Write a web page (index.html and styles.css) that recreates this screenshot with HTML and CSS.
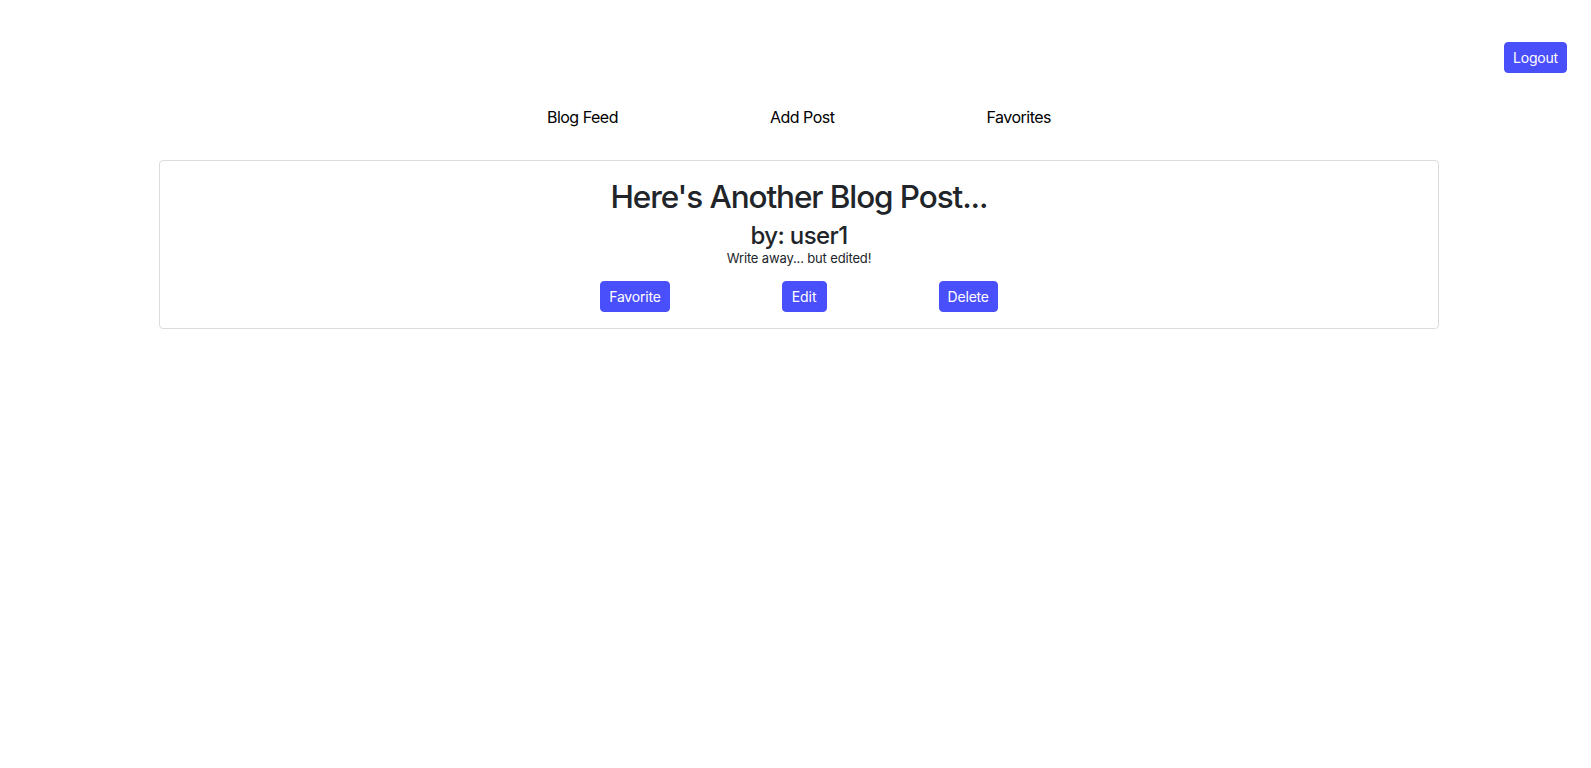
FILE: index.html
```html
<!DOCTYPE html>
<html lang="en">
<head>
<meta charset="utf-8">
<title>Blog</title>
<link rel="stylesheet" href="styles.css">
</head>
<body>
<header class="topbar">
  <button class="btn">Logout</button>
</header>
<main class="page">
  <nav class="nav">
    <a class="nav-link" href="#">Blog Feed</a>
    <a class="nav-link" href="#">Add Post</a>
    <a class="nav-link" href="#">Favorites</a>
  </nav>
  <section class="card">
    <h2 class="post-title">Here's Another Blog Post...</h2>
    <h4 class="post-author">by: user1</h4>
    <p class="post-body">Write away... but edited!</p>
    <div class="actions">
      <button class="btn">Favorite</button>
      <button class="btn btn-edit">Edit</button>
      <button class="btn">Delete</button>
    </div>
  </section>
</main>
</body>
</html>
```
FILE: styles.css
```css
* { box-sizing: border-box; }
body {
  margin: 0;
  font-family: Inter, "Noto Sans", "Liberation Sans", sans-serif;
  color: #212529;
  background: #fff;
}
.topbar {
  display: flex;
  justify-content: flex-end;
  padding: 42px 24px 0 0;
}
.btn {
  font-family: inherit;
  font-size: 14px;
  line-height: 21px;
  letter-spacing: -0.2px;
  padding: 4px 8px;
  border: 1px solid #4a4ffc;
  border-radius: 4px;
  background: #4a4ffc;
  color: #fff;
  cursor: pointer;
}
.btn-edit {
  padding: 4px 9px;
  letter-spacing: 0;
}
.page {
  margin: 0 152px 0 159px;
}
.nav {
  display: flex;
  justify-content: center;
  gap: 152px;
  padding-top: 32px;
}
.nav-link {
  color: #000;
  text-decoration: none;
  font-size: 16px;
  line-height: 24px;
  letter-spacing: -0.5px;
}
.card {
  margin-top: 31px;
  border: 1px solid #dcdcdc;
  border-radius: 4px;
  padding: 17px 16px 16px;
  text-align: center;
}
.post-title {
  margin: 0 0 7px;
  font-size: 31.5px;
  font-weight: 500;
  line-height: 38px;
  letter-spacing: -1.1px;
}
.post-author {
  margin: 0;
  font-size: 24px;
  font-weight: 500;
  line-height: 25px;
  letter-spacing: -0.6px;
}
.post-body {
  margin: 0 0 13px;
  font-size: 13px;
  line-height: 20px;
  letter-spacing: -0.15px;
}
.actions {
  display: flex;
  justify-content: center;
  gap: 112px;
}
```
